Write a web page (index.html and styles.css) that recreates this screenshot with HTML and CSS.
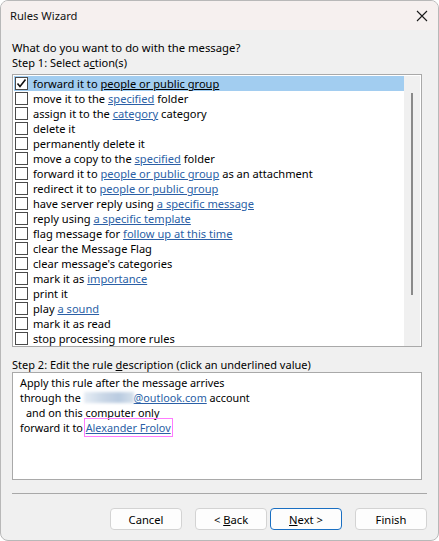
FILE: index.html
```html
<!DOCTYPE html>
<html>
<head>
<meta charset="utf-8">
<link rel="stylesheet" href="styles.css">
</head>
<body>
<div class="window">
  <div class="titlebar">
    <span class="title">Rules Wizard</span>
    <svg class="close" width="12" height="12" viewBox="0 0 12 12"><path d="M1 1 L11 11 M11 1 L1 11" stroke="#1a1a1a" stroke-width="1.1" fill="none"/></svg>
  </div>
  <div class="content">
    <div class="label question">What do you want to do with the message?</div>
    <div class="label">Step 1: Select a<u>c</u>tion(s)</div>
    <div class="listbox">
      <div class="rows">
        <div class="row selected"><span class="cb checked"><svg width="11" height="11" viewBox="0 0 11 11"><path d="M1.5 5.5 L4 8.5 L9.5 1.5" stroke="#111" stroke-width="1.6" fill="none"/></svg></span><span>forward it to <span class="ul">people or public group</span></span></div>
        <div class="row"><span class="cb"></span><span>move it to the <a>specified</a> folder</span></div>
        <div class="row"><span class="cb"></span><span>assign it to the <a>category</a> category</span></div>
        <div class="row"><span class="cb"></span><span>delete it</span></div>
        <div class="row"><span class="cb"></span><span>permanently delete it</span></div>
        <div class="row"><span class="cb"></span><span>move a copy to the <a>specified</a> folder</span></div>
        <div class="row"><span class="cb"></span><span>forward it to <a>people or public group</a> as an attachment</span></div>
        <div class="row"><span class="cb"></span><span>redirect it to <a>people or public group</a></span></div>
        <div class="row"><span class="cb"></span><span>have server reply using <a>a specific message</a></span></div>
        <div class="row"><span class="cb"></span><span>reply using <a>a specific template</a></span></div>
        <div class="row"><span class="cb"></span><span>flag message for <a>follow up at this time</a></span></div>
        <div class="row"><span class="cb"></span><span>clear the Message Flag</span></div>
        <div class="row"><span class="cb"></span><span>clear message's categories</span></div>
        <div class="row"><span class="cb"></span><span>mark it as <a>importance</a></span></div>
        <div class="row"><span class="cb"></span><span>print it</span></div>
        <div class="row"><span class="cb"></span><span>play <a>a sound</a></span></div>
        <div class="row"><span class="cb"></span><span>mark it as read</span></div>
        <div class="row"><span class="cb"></span><span>stop processing more rules</span></div>
      </div>
      <div class="scrollbar"><div class="thumb"></div></div>
    </div>
    <div class="label step2">Step 2: Edit the rule <u>d</u>escription (click an underlined value)</div>
    <div class="desc">
      <div class="line">Apply this rule after the message arrives</div>
      <div class="line">through the <span class="blur"></span><a>@outlook.com</a> account</div>
      <div class="line indent">and on this computer only</div>
      <div class="line">forward it to <a class="focus">Alexander Frolov</a></div>
    </div>
    <div class="sep"></div>
    <div class="buttons">
      <button class="btn">Cancel</button>
      <button class="btn back">&lt; <u>B</u>ack</button>
      <button class="btn default"><u>N</u>ext &gt;</button>
      <button class="btn">Finish</button>
    </div>
  </div>
</div>
</body>
</html>
```

FILE: styles.css
```css
html, body {
  margin: 0;
  padding: 0;
  background: #ffffff;
}
.window {
  width: 439px;
  height: 541px;
  box-sizing: border-box;
  border: 1px solid #b8b8b8;
  border-radius: 8px;
  overflow: hidden;
  background: #f0f0f0;
  font-family: "Noto Sans", "Open Sans", sans-serif;
  font-size: 11px;
  color: #000;
}
.titlebar {
  height: 29px;
  background: #f6f0ef;
  display: flex;
  align-items: center;
  justify-content: space-between;
  padding: 0 10px 0 9px;
}
.title {
  font-size: 11.2px;
  color: #111;
}
.content {
  padding: 10px 0 0 11px;
}
.label {
  height: 15px;
  line-height: 15px;
  white-space: nowrap;
}
.question {
  font-size: 11.3px;
}
.listbox {
  margin-top: 4px;
  width: 410px;
  height: 273px;
  box-sizing: border-box;
  border: 1px solid #a9a9a9;
  background: #fff;
  padding: 1px;
  display: flex;
}
.rows {
  width: 391px;
}
.row {
  height: 15px;
  line-height: 15px;
  display: flex;
  align-items: center;
  white-space: nowrap;
  font-size: 11.1px;
}
.row.selected {
  background: #a2cdf0;
}
.cb {
  width: 11px;
  height: 11px;
  border: 1px solid #4a4a4a;
  background: #fff;
  margin: 0 5px 0 1px;
  flex: none;
  display: flex;
  align-items: center;
  justify-content: center;
}
a, .ul {
  color: #2b5fa6;
  text-decoration: underline;
}
.ul {
  color: #000;
}
.scrollbar {
  width: 16px;
  height: 270px;
  background: #f0f0f0;
  display: flex;
  justify-content: center;
}
.thumb {
  width: 2px;
  height: 202px;
  margin-top: 17px;
  background: #8a8a8a;
}
.step2 {
  margin-top: 10px;
}
.desc {
  width: 410px;
  height: 108px;
  box-sizing: border-box;
  border: 1px solid #a9a9a9;
  background: #fff;
  padding: 2px 7px;
  font-size: 10.8px;
}
.line {
  height: 15px;
  line-height: 15px;
  white-space: nowrap;
}
.indent {
  padding-left: 6px;
}
.blur {
  display: inline-block;
  vertical-align: -1px;
  width: 50px;
  height: 11px;
  background: linear-gradient(90deg, #e6edf5 0%, #c8d6e6 40%, #b9cbe0 70%, #d6e1ec 100%);
  filter: blur(1.5px);
}
.focus {
  outline: 1.5px solid #ff7bff;
  outline-offset: 1px;
}
.sep {
  margin-top: 13px;
  width: 415px;
  height: 1px;
  background: #a8a8a8;
}
.buttons {
  margin-top: 14px;
  width: 415px;
  display: flex;
  justify-content: flex-end;
  gap: 13px;
}
.btn {
  width: 72px;
  height: 22px;
  box-sizing: border-box;
  border: 1px solid #d3d3d3;
  border-radius: 4px;
  background: #fdfdfd;
  font-family: "Noto Sans", "Open Sans", sans-serif;
  font-size: 11.2px;
  color: #000;
  padding: 0;
  margin: 0;
}
.btn.default {
  border-color: #1a6fc2;
  margin-left: -10px;
}
```
